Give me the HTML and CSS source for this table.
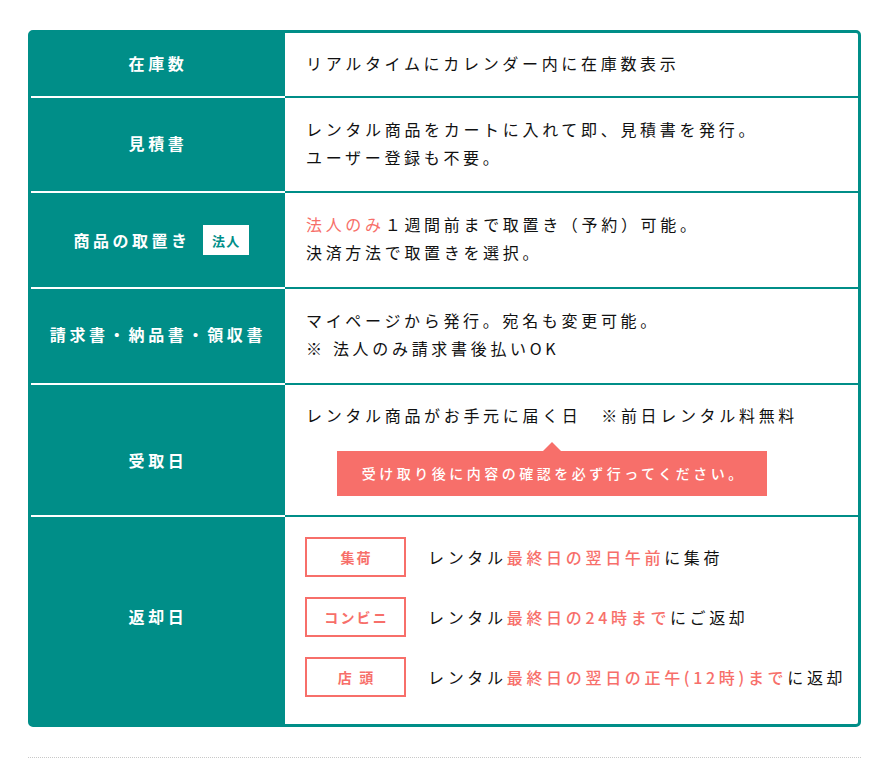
FILE: index.html
```html
<!DOCTYPE html>
<html lang="ja">
<head>
<meta charset="utf-8">
<title>ご利用案内</title>
<link rel="stylesheet" href="styles.css">
</head>
<body>
<div class="page">
  <div class="spec">
    <div class="row r1">
      <div class="th">在庫数</div>
      <div class="td">リアルタイムにカレンダー内に在庫数表示</div>
    </div>
    <div class="row r2">
      <div class="th">見積書</div>
      <div class="td"><p>レンタル商品をカートに入れて即、見積書を発行。</p><p>ユーザー登録も不要。</p></div>
    </div>
    <div class="row r3">
      <div class="th">商品の取置き<span class="badge">法人</span></div>
      <div class="td"><p><span class="red">法人のみ</span>１週間前まで取置き（予約）可能。</p><p>決済方法で取置きを選択。</p></div>
    </div>
    <div class="row r4">
      <div class="th">請求書・納品書・領収書</div>
      <div class="td"><p>マイページから発行。宛名も変更可能。</p><p>※ 法人のみ請求書後払いOK</p></div>
    </div>
    <div class="row r5">
      <div class="th">受取日</div>
      <div class="td">
        <p>レンタル商品がお手元に届く日　※前日レンタル料無料</p>
        <div class="note">受け取り後に内容の確認を必ず行ってください。</div>
      </div>
    </div>
    <div class="row r6">
      <div class="th">返却日</div>
      <div class="td td-ret">
        <div class="ret"><span class="tag">集荷</span><span class="ret-text">レンタル<span class="red">最終日の翌日午前</span>に集荷</span></div>
        <div class="ret"><span class="tag">コンビニ</span><span class="ret-text">レンタル<span class="red">最終日の24時まで</span>にご返却</span></div>
        <div class="ret"><span class="tag">店 頭</span><span class="ret-text">レンタル<span class="red">最終日の翌日の正午(12時)まで</span>に返却</span></div>
      </div>
    </div>
  </div>
  <div class="rule"></div>
</div>
</body>
</html>
```
FILE: styles.css
```css
html, body {
  margin: 0;
  background: #fff;
}
body {
  font-family: "Noto Sans CJK JP", "Noto Sans", sans-serif;
  color: #000;
}
p {
  margin: 0;
}
.page {
  padding: 30px 29px 0 28px;
}
.spec {
  border: 3px solid #008e88;
  border-radius: 5px;
  overflow: hidden;
  background: #008e88;
}
.row {
  display: grid;
  grid-template-columns: 254px 1fr;
}
.r1 { height: 63px; }
.r2 { height: 95px; }
.r3 { height: 96px; }
.r4 { height: 96px; }
.r5 { height: 132px; }
.r6 { height: 209px; }
.row + .row .th {
  border-top: 2px solid #fff;
}
.row + .row .td {
  border-top: 2px solid #008e88;
}
.th {
  box-sizing: border-box;
  padding-bottom: 4px;
  background: #008e88;
  color: #fff;
  font-weight: 700;
  font-size: 16px;
  letter-spacing: 0.23em;
  display: flex;
  align-items: center;
  justify-content: center;
}
.r3 .th {
  padding: 0 0 0 6px;
  letter-spacing: 0.22em;
}
.r5 .th {
  padding: 24px 0 4px;
}
.r6 .th {
  padding-bottom: 10px;
}
.badge {
  display: inline-flex;
  align-items: center;
  justify-content: center;
  width: 46px;
  height: 30px;
  margin-left: 12px;
  background: #fff;
  color: #008e88;
  font-size: 13px;
  letter-spacing: 0.1em;
  text-indent: 0.1em;
}
.td {
  box-sizing: border-box;
  background: #fff;
  padding: 0 20px 4px 21px;
  display: flex;
  flex-direction: column;
  justify-content: center;
  align-items: flex-start;
  font-size: 16px;
  line-height: 28px;
  letter-spacing: 0.23em;
  color: #111;
}
.red {
  color: #f76f6a;
}
.note {
  position: relative;
  margin: 22px 0 0 31px;
  width: 430px;
  height: 45px;
  background: #f76f6a;
  color: #fff;
  font-weight: 500;
  font-size: 14px;
  letter-spacing: 0.25em;
  text-indent: 0.25em;
  display: flex;
  align-items: center;
  justify-content: center;
}
.note::before {
  content: "";
  position: absolute;
  left: 50%;
  top: -9px;
  margin-left: -9px;
  border-style: solid;
  border-width: 0 9px 9px 9px;
  border-color: transparent transparent #f76f6a transparent;
}
.td-ret {
  justify-content: flex-start;
  padding: 20px 0 0 20px;
  gap: 20px;
}
.ret {
  display: flex;
  align-items: center;
}
.tag {
  box-sizing: border-box;
  width: 101px;
  height: 40px;
  margin-right: 22px;
  border: 2px solid #f76f6a;
  color: #f76f6a;
  font-weight: 700;
  font-size: 14px;
  letter-spacing: 0.15em;
  text-indent: 0.15em;
  display: flex;
  align-items: center;
  justify-content: center;
}
.ret-text {
  font-size: 16px;
  letter-spacing: 0.23em;
  font-weight: 400;
  white-space: nowrap;
}
.ret-text .red {
  font-weight: 500;
}
.rule {
  margin-top: 30px;
  border-top: 1px dotted #c8c8c8;
}
```
